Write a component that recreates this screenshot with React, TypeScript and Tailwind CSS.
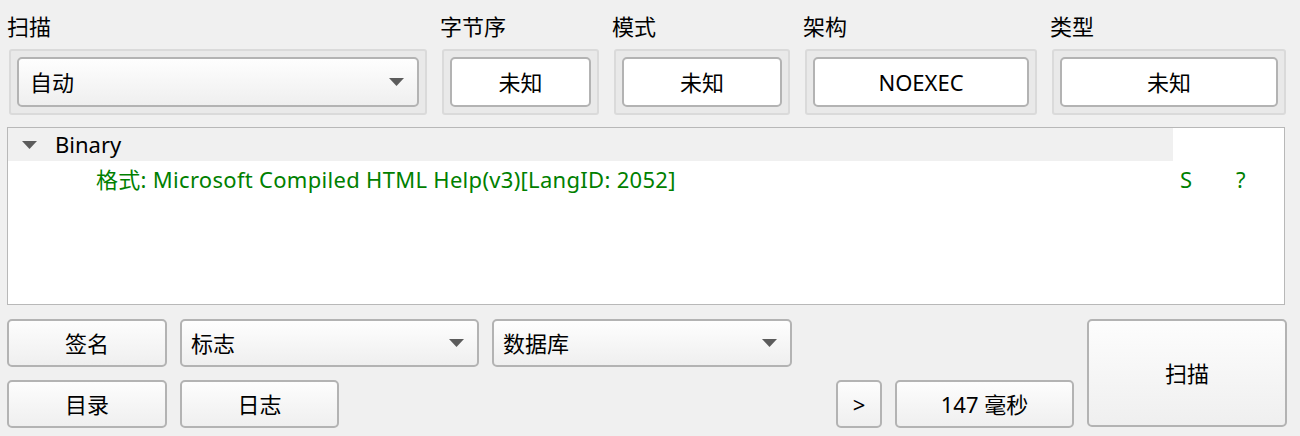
import React from "react";

const FONT = { fontFamily: '"Noto Sans", "Noto Sans CJK SC", sans-serif' };

function Arrow() {
  return (
    <svg width="15" height="8" viewBox="0 0 15 8" className="shrink-0">
      <path d="M0 0 H15 L7.5 8 Z" fill="#5c5c5c" />
    </svg>
  );
}

function Combo({ label, className = "" }: { label: string; className?: string }) {
  return (
    <div
      className={`flex h-[48px] items-center justify-between rounded-[5px] border-2 border-[#b3b3b3] bg-gradient-to-b from-[#fefefe] to-[#efefef] pl-[9px] pr-[13px] ${className}`}
    >
      <span>{label}</span>
      <Arrow />
    </div>
  );
}

function Btn({ label, className = "" }: { label: string; className?: string }) {
  return (
    <div
      className={`flex items-center justify-center rounded-[5px] border-2 border-[#b3b3b3] bg-gradient-to-b from-[#fdfdfd] to-[#efefef] ${className}`}
    >
      {label}
    </div>
  );
}

function InfoGroup({ title, value, width }: { title: string; value: string; width: string }) {
  return (
    <div className={`flex flex-col ${width}`}>
      <div className="-ml-[2px] h-[49px] pt-[8px] leading-[36px]">{title}</div>
      <div className="h-[66px] rounded-[3px] border-2 border-[#dadada] bg-[#e9e9e9] p-[6px]">
        <div className="flex h-[50px] items-center justify-center rounded-[5px] border-2 border-[#b3b3b3] bg-white">
          {value}
        </div>
      </div>
    </div>
  );
}

export default function App() {
  return (
    <div className="h-[436px] w-[1300px] overflow-hidden bg-[#f0f0f0] text-[22px] text-black" style={FONT}>
      {/* 顶部信息 */}
      <div className="flex gap-[15px] pl-[9px]">
        <div className="flex w-[418px] flex-col">
          <div className="-ml-[2px] h-[49px] pt-[8px] leading-[36px]">扫描</div>
          <div className="h-[66px] rounded-[3px] border-2 border-[#dadada] bg-[#e9e9e9] p-[6px]">
            <Combo label="自动" className="h-[50px] pl-[11px]" />
          </div>
        </div>
        <InfoGroup title="字节序" value="未知" width="w-[157px]" />
        <InfoGroup title="模式" value="未知" width="w-[176px]" />
        <InfoGroup title="架构" value="NOEXEC" width="w-[232px]" />
        <InfoGroup title="类型" value="未知" width="w-[234px]" />
      </div>

      {/* 结果树 */}
      <div className="ml-[7px] mt-[12px] h-[178px] w-[1278px] border-[1.5px] border-[#b8b8b8] bg-white">
        <div className="flex h-[33px] w-[1165px] items-center bg-[#f0f0f0]">
          <svg width="15" height="8" viewBox="0 0 15 8" className="ml-[14px]">
            <path d="M0 0 H15 L7.5 8 Z" fill="#5c5c5c" />
          </svg>
          <span className="ml-[18px]">Binary</span>
        </div>
        <div className="flex h-[36px] items-center text-[#008000]">
          <span className="ml-[88px] w-[1084px] tracking-[0.3px]">
            格式: Microsoft Compiled HTML Help(v3)[LangID: 2052]
          </span>
          <span className="w-[56px]">S</span>
          <span>?</span>
        </div>
      </div>

      {/* 底部按钮 */}
      <div className="mt-[14px] flex gap-[13px] pl-[7px]">
        <div className="flex w-[1067px] flex-col gap-[13px]">
          <div className="flex gap-[13px]">
            <Btn label="签名" className="h-[48px] w-[160px]" />
            <Combo label="标志" className="w-[299px]" />
            <Combo label="数据库" className="w-[300px]" />
          </div>
          <div className="flex">
            <Btn label="目录" className="h-[48px] w-[160px]" />
            <Btn label="日志" className="ml-[13px] h-[48px] w-[159px]" />
            <div className="flex-1" />
            <Btn label=">" className="h-[48px] w-[46px]" />
            <Btn label="147 毫秒" className="ml-[13px] h-[48px] w-[179px]" />
          </div>
        </div>
        <Btn label="扫描" className="h-[108px] w-[200px]" />
      </div>
    </div>
  );
}
